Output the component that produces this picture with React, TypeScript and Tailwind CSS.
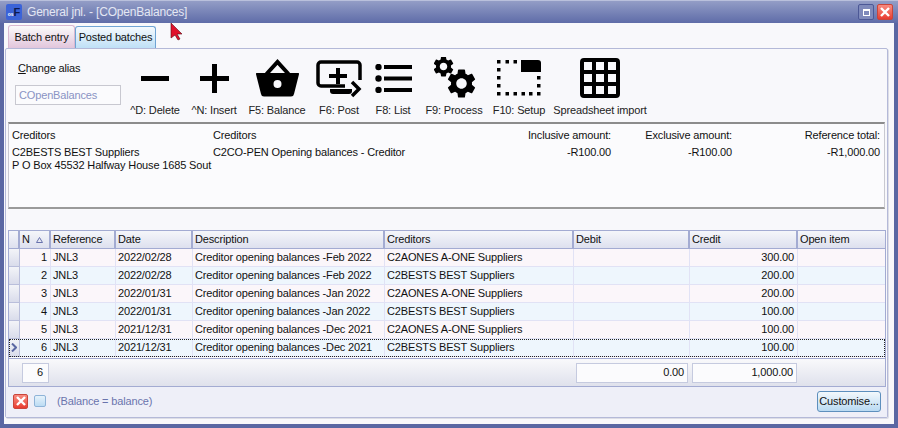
const GEAR =
  "M19.14 12.94c.04-.3.06-.61.06-.94 0-.32-.02-.64-.07-.94l2.03-1.58c.18-.14.23-.41.12-.61l-1.92-3.32c-.12-.22-.37-.29-.59-.22l-2.39.96c-.5-.38-1.03-.7-1.62-.94l-.36-2.54c-.04-.24-.24-.41-.48-.41h-3.84c-.24 0-.43.17-.47.41l-.36 2.54c-.59.24-1.13.57-1.62.94l-2.39-.96c-.22-.08-.47 0-.59.22L2.74 8.87c-.12.21-.08.47.12.61l2.03 1.58c-.05.3-.09.63-.09.94s.02.64.07.94l-2.03 1.58c-.18.14-.23.41-.12.61l1.92 3.32c.12.22.37.29.59.22l2.39-.96c.5.38 1.03.7 1.62.94l.36 2.54c.05.24.24.41.48.41h3.84c.24 0 .44-.17.47-.41l.36-2.54c.59-.24 1.13-.56 1.62-.94l2.39.96c.22.08.47 0 .59-.22l1.92-3.32c.12-.22.07-.47-.12-.61l-2.01-1.58zM12 15.6c-1.98 0-3.6-1.62-3.6-3.6s1.62-3.6 3.6-3.6 3.6 1.62 3.6 3.6-1.62 3.6-3.6 3.6z";

const COLS = "grid-cols-[11px_31px_65px_77px_192px_189px_116px_108px_87px]";

const ROWS = [
  { n: 1, date: "2022/02/28", desc: "Creditor opening balances -Feb 2022", cred: "C2AONES A-ONE Suppliers", credit: "300.00" },
  { n: 2, date: "2022/02/28", desc: "Creditor opening balances -Feb 2022", cred: "C2BESTS BEST Suppliers", credit: "200.00" },
  { n: 3, date: "2022/01/31", desc: "Creditor opening balances -Jan 2022", cred: "C2AONES A-ONE Suppliers", credit: "200.00" },
  { n: 4, date: "2022/01/31", desc: "Creditor opening balances -Jan 2022", cred: "C2BESTS BEST Suppliers", credit: "100.00" },
  { n: 5, date: "2021/12/31", desc: "Creditor opening balances -Dec 2021", cred: "C2AONES A-ONE Suppliers", credit: "100.00" },
  { n: 6, date: "2021/12/31", desc: "Creditor opening balances -Dec 2021", cred: "C2BESTS BEST Suppliers", credit: "100.00" },
];

function MinusIcon() {
  return (
    <svg width="28" height="5" viewBox="0 0 28 5">
      <rect width="28" height="5" fill="#000" />
    </svg>
  );
}

function PlusIcon() {
  return (
    <svg width="29" height="29" viewBox="0 0 29 29">
      <path d="M12 0h5v12h12v5H17v12h-5V17H0v-5h12z" fill="#000" />
    </svg>
  );
}

function BasketIcon() {
  return (
    <svg width="43" height="38" viewBox="0 0 43 38">
      <path d="M10.500 15L21.500 3l11 12" fill="none" stroke="#000" strokeWidth="4" />
      <path fillRule="evenodd" d="M1 14h41a1 1 0 0 1 1 1.300L38 35a3 3 0 0 1-3 2.500H8A3 3 0 0 1 5 35L0 15.300A1 1 0 0 1 1 14zM21.500 21a4 4 0 1 0 0 8 4 4 0 0 0 0-8z" fill="#000" />
    </svg>
  );
}

function PostIcon() {
  return (
    <svg className="mt-[2px]" width="46" height="38" viewBox="0 0 46 38">
      <path d="M29 26H5a3 3 0 0 1-3-3V5a3 3 0 0 1 3-3h36a3 3 0 0 1 3 3v15" fill="none" stroke="#000" strokeWidth="3.500" />
      <path d="M20 8h4v6h7v4h-7v6h-4v-6h-7v-4h7z" fill="#000" />
      <path d="M14 29h22v2a3 3 0 0 1-3 3H17a3 3 0 0 1-3-3z" fill="#000" />
      <path d="M36 22l7 7-7 7" fill="none" stroke="#000" strokeWidth="3.500" />
    </svg>
  );
}

function ListIcon() {
  return (
    <svg width="37" height="29" viewBox="0 0 37 29">
      <circle cx="3.500" cy="3" r="3.200" fill="#000" />
      <circle cx="3.500" cy="14.500" r="3.200" fill="#000" />
      <circle cx="3.500" cy="26" r="3.200" fill="#000" />
      <path d="M9 1h28v4H9zM9 12.500h28v4H9zM9 24h28v4H9z" fill="#000" />
    </svg>
  );
}

function GearsIcon() {
  return (
    <svg className="ml-[4px]" width="44" height="42" viewBox="0 0 44 42">
      <svg x="-3" y="-3" width="25" height="25" viewBox="0 0 24 24">
        <path d={GEAR} fill="#000" />
      </svg>
      <svg x="10" y="9" width="35" height="35" viewBox="0 0 24 24">
        <path d={GEAR} fill="#000" />
      </svg>
    </svg>
  );
}

function SetupIcon() {
  return (
    <svg width="44" height="36" viewBox="0 0 44 36">
      <path d="M24 0h17a3 3 0 0 1 3 3v9H24z" fill="#000" />
      <path d="M0 0h3.500v3.500H0zM8.500 0H12v3.500H8.500zM16.500 0H20v3.500h-3.500zM0 8h3.500v3.500H0zM0 16h3.500v3.500H0zM0 24h3.500v3.500H0zM0 32h3.500v3.500H0zM8.500 32H12v3.500H8.500zM16.500 32H20v3.500h-3.500zM24.500 32H28v3.500h-3.500zM32 32h3.500v3.500H32zM40 32h3.500v3.500H40zM40 24h3.500v3.500H40zM40 16h3.500v3.500H40z" fill="#000" />
    </svg>
  );
}

function GridIcon() {
  return (
    <svg width="40" height="40" viewBox="0 0 40 40">
      <path
        fillRule="evenodd"
        fill="#000"
        d="M4 0h32a4 4 0 0 1 4 4v32a4 4 0 0 1-4 4H4a4 4 0 0 1-4-4V4a4 4 0 0 1 4-4zM4 4v8h8V4zM16 4v8h8V4zM28 4v8h8V4zM4 16v8h8v-8zM16 16v8h8v-8zM28 16v8h8v-8zM4 28v8h8v-8zM16 28v8h8v-8zM28 28v8h8v-8z"
      />
    </svg>
  );
}

function ToolButton({ label, width, children }: { label: string; width: string; children: React.ReactNode }) {
  return (
    <div className={`flex flex-col items-center ${width}`}>
      <div className="flex h-[44px] items-center justify-center">{children}</div>
      <span className="mt-[4px] leading-[13px] whitespace-nowrap text-[#222]">{label}</span>
    </div>
  );
}

function CloseGlyph({ className }: { className: string }) {
  return (
    <div className={`flex items-center justify-center rounded-[2px] border border-[#c9453a] bg-gradient-to-b from-[#f78a80] to-[#e8392e] ${className}`}>
      <svg width="10" height="10" viewBox="0 0 10 10">
        <path d="M1 1l8 8M9 1l-8 8" stroke="#fff" strokeWidth="2.400" />
      </svg>
    </div>
  );
}

export default function App() {
  return (
    <div className="relative flex h-[428px] w-[898px] flex-col overflow-hidden bg-[#5a67a3] font-['Liberation_Sans',sans-serif] text-[11px] tracking-[-0.15px] text-[#111]">
      {/* title bar */}
      <div className="flex h-[23px] shrink-0 items-center border-t border-[#b9c0dc] bg-gradient-to-b from-[#939dc6] to-[#5f6ca8] pl-[6px] pr-[5px]">
        <div className="flex h-[16px] w-[16px] items-end justify-center overflow-hidden rounded-[2px] bg-[#3b63d8] pb-[2px] text-[11px] font-bold leading-none tracking-normal text-[#0d1a50]">
          <span className="mb-[1px] text-[5px] text-white">os</span>F
        </div>
        <span className="ml-[5px] text-[12px] tracking-[-0.2px] text-[#e4e7f3]">General jnl. - [COpenBalances]</span>
        <div className="ml-auto flex items-center gap-[3px]">
          <div className="flex h-[16px] w-[16px] items-center justify-center rounded-[2px] border border-[#4c5896] bg-[#7f8abb]">
            <div className="h-[7px] w-[7px] border border-t-2 border-white" />
          </div>
          <CloseGlyph className="h-[16px] w-[16px]" />
        </div>
      </div>

      {/* client area */}
      <div className="mx-[4px] mb-[4px] flex min-h-0 flex-1 flex-col bg-[#f8f8fb] pt-[2px]">
        <div className="flex h-[23px] shrink-0 items-end pl-[4px]">
          <div className="flex h-[23px] w-[67px] items-center justify-center rounded-t-[3px] border border-b-0 border-[#d9b8d0] bg-gradient-to-b from-[#fafafa] to-[#e2c6dc]">
            Batch entry
          </div>
          <div className="flex h-[22px] w-[81px] items-center justify-center rounded-t-[3px] border border-b-0 border-[#6fa4d4] bg-gradient-to-b from-[#f4f9fd] to-[#bfe0f6]">
            Posted batches
          </div>
        </div>

        <div className="mr-[6px] mb-[6px] ml-[1px] flex min-h-0 flex-1 flex-col rounded-[2px] border border-[#b4b9d8] bg-[#f8f8fb] shadow-[1px_1px_0_#dcdde6]">
          {/* toolbar */}
          <div className="flex h-[73px] shrink-0">
            <div className="flex w-[119px] shrink-0 flex-col pl-[9px] pt-[13px]">
              <span className="ml-[3px] leading-[13px]">
                <span className="underline">C</span>hange alias
              </span>
              <div className="mt-[10px] flex h-[20px] w-[106px] items-center border border-[#c8c8d0] bg-[#fbfbfd] pl-[3px] text-[#8a93c4]">
                COpenBalances
              </div>
            </div>
            <div className="flex items-start pt-[7px]">
              <ToolButton label="^D: Delete" width="w-[60px]">
                <MinusIcon />
              </ToolButton>
              <ToolButton label="^N: Insert" width="w-[58px]">
                <PlusIcon />
              </ToolButton>
              <ToolButton label="F5: Balance" width="w-[68px]">
                <BasketIcon />
              </ToolButton>
              <ToolButton label="F6: Post" width="w-[56px]">
                <PostIcon />
              </ToolButton>
              <ToolButton label="F8: List" width="w-[52px]">
                <ListIcon />
              </ToolButton>
              <ToolButton label="F9: Process" width="w-[70px]">
                <GearsIcon />
              </ToolButton>
              <ToolButton label="F10: Setup" width="w-[60px]">
                <SetupIcon />
              </ToolButton>
              <ToolButton label="Spreadsheet import" width="w-[102px]">
                <GridIcon />
              </ToolButton>
            </div>
          </div>

          {/* creditor summary */}
          <div className="mx-[2px] h-[87px] shrink-0 border-x border-t-2 border-b-2 border-x-[#c9c9d0] border-t-[#8c8c8c] border-b-[#9a9a9a] bg-[#fbfbfd] px-[3px] pt-[5px] leading-[13px]">
            <div className="flex">
              <div className="w-[201px]">
                <div className="mb-[4px]">Creditors</div>
                <div>C2BESTS BEST Suppliers</div>
                <div className="whitespace-nowrap">P O Box 45532 Halfway House 1685 Sout</div>
              </div>
              <div className="w-[240px]">
                <div className="mb-[4px]">Creditors</div>
                <div>C2CO-PEN Opening balances - Creditor</div>
              </div>
              <div className="w-[158px] text-right">
                <div className="mb-[4px]">Inclusive amount:</div>
                <div>-R100.00</div>
              </div>
              <div className="w-[121px] text-right">
                <div className="mb-[4px]">Exclusive amount:</div>
                <div>-R100.00</div>
              </div>
              <div className="w-[148px] text-right">
                <div className="mb-[4px]">Reference total:</div>
                <div>-R1,000.00</div>
              </div>
            </div>
          </div>

          {/* grid */}
          <div className="mx-[2px] mt-[21px] w-[878px] shrink-0 border border-[#a3abd2] bg-[#fbfbfd]">
            <div className={`grid h-[18px] ${COLS} bg-gradient-to-b from-[#f5f6fa] to-[#dcdfee]`}>
              {["", "N", "Reference", "Date", "Description", "Creditors", "Debit", "Credit", "Open item"].map((h, i) => (
                <div key={i} className="flex items-center gap-[6px] border-r-2 border-b border-[#a3abd2] pl-[2px] leading-none whitespace-nowrap last:border-r-0">
                  {h}
                  {h === "N" && (
                    <svg width="7" height="6" viewBox="0 0 7 6">
                      <path d="M3.500 .5L6.500 5.500H.5z" fill="none" stroke="#6872ad" />
                    </svg>
                  )}
                </div>
              ))}
            </div>
            {ROWS.map((r) => (
              <div
                key={r.n}
                className={`grid h-[18px] ${COLS} ${r.n % 2 ? "bg-[#fbf6fa]" : "bg-[#eef6fd]"} ${r.n === 6 ? "outline-1 -outline-offset-1 outline-dotted outline-[#222]" : ""}`}
              >
                <div className="flex items-center justify-center border-r border-b border-[#b9bedb] bg-gradient-to-b from-[#f3f4f8] to-[#d9dceb]">
                  {r.n === 6 && (
                    <svg width="6" height="9" viewBox="0 0 6 9">
                      <path d="M1 .5l4 4-4 4" fill="none" stroke="#5a67a3" strokeWidth="2" />
                    </svg>
                  )}
                </div>
                <div className="border-r border-b border-[#e1e2f5] pr-[3px] text-right leading-[17px]">{r.n}</div>
                <div className="border-r border-b border-[#e1e2f5] pl-[2px] leading-[17px]">JNL3</div>
                <div className="border-r border-b border-[#e1e2f5] pl-[2px] leading-[17px]">{r.date}</div>
                <div className="border-r border-b border-[#e1e2f5] pl-[2px] leading-[17px] whitespace-nowrap">{r.desc}</div>
                <div className="border-r border-b border-[#e1e2f5] pl-[2px] leading-[17px] whitespace-nowrap">{r.cred}</div>
                <div className="border-r border-b border-[#e1e2f5]" />
                <div className="border-r border-b border-[#e1e2f5] pr-[3px] text-right leading-[17px]">{r.credit}</div>
                <div className="border-b border-[#e1e2f5]" />
              </div>
            ))}
            <div className="mt-[1px] flex h-[28px] items-center border-t border-[#a3abd2] bg-gradient-to-b from-[#f9f9fb] to-[#dfe1ec] pl-[13px]">
              <div className="flex h-[20px] w-[27px] items-center justify-end border border-[#c5cadf] bg-[#fbfbfd] pr-[5px]">6</div>
              <div className="ml-[527px] flex h-[20px] w-[112px] items-center justify-end border border-[#c5cadf] bg-[#fbfbfd] pr-[3px]">0.00</div>
              <div className="ml-[4px] flex h-[20px] w-[105px] items-center justify-end border border-[#c5cadf] bg-[#fbfbfd] pr-[3px]">1,000.00</div>
            </div>
          </div>

          {/* status row */}
          <div className="flex flex-1 items-center bg-[#eeeff8] pb-[2px] pl-[7px] pr-[6px]">
            <CloseGlyph className="h-[15px] w-[15px]" />
            <div className="ml-[6px] h-[12px] w-[12px] rounded-[2px] border border-[#8fb4d8] bg-gradient-to-b from-[#e6f2fb] to-[#bcdcf3]" />
            <span className="ml-[11px] text-[#6a74ad]">(Balance = balance)</span>
            <button className="ml-auto h-[21px] w-[64px] rounded-[3px] border border-[#5d8fbd] bg-gradient-to-b from-[#f3f8fc] to-[#b9daf2] text-[#111]">
              Customise...
            </button>
          </div>
        </div>
      </div>

      {/* mouse pointer from the capture */}
      <svg className="absolute left-[170px] top-[22px]" width="15" height="19" viewBox="0 0 15 19">
        <path d="M1 1v15l4-3 3 5 2-1-3-5h5z" fill="#e0122c" stroke="#5a0a14" strokeWidth=".6" />
      </svg>
    </div>
  );
}
